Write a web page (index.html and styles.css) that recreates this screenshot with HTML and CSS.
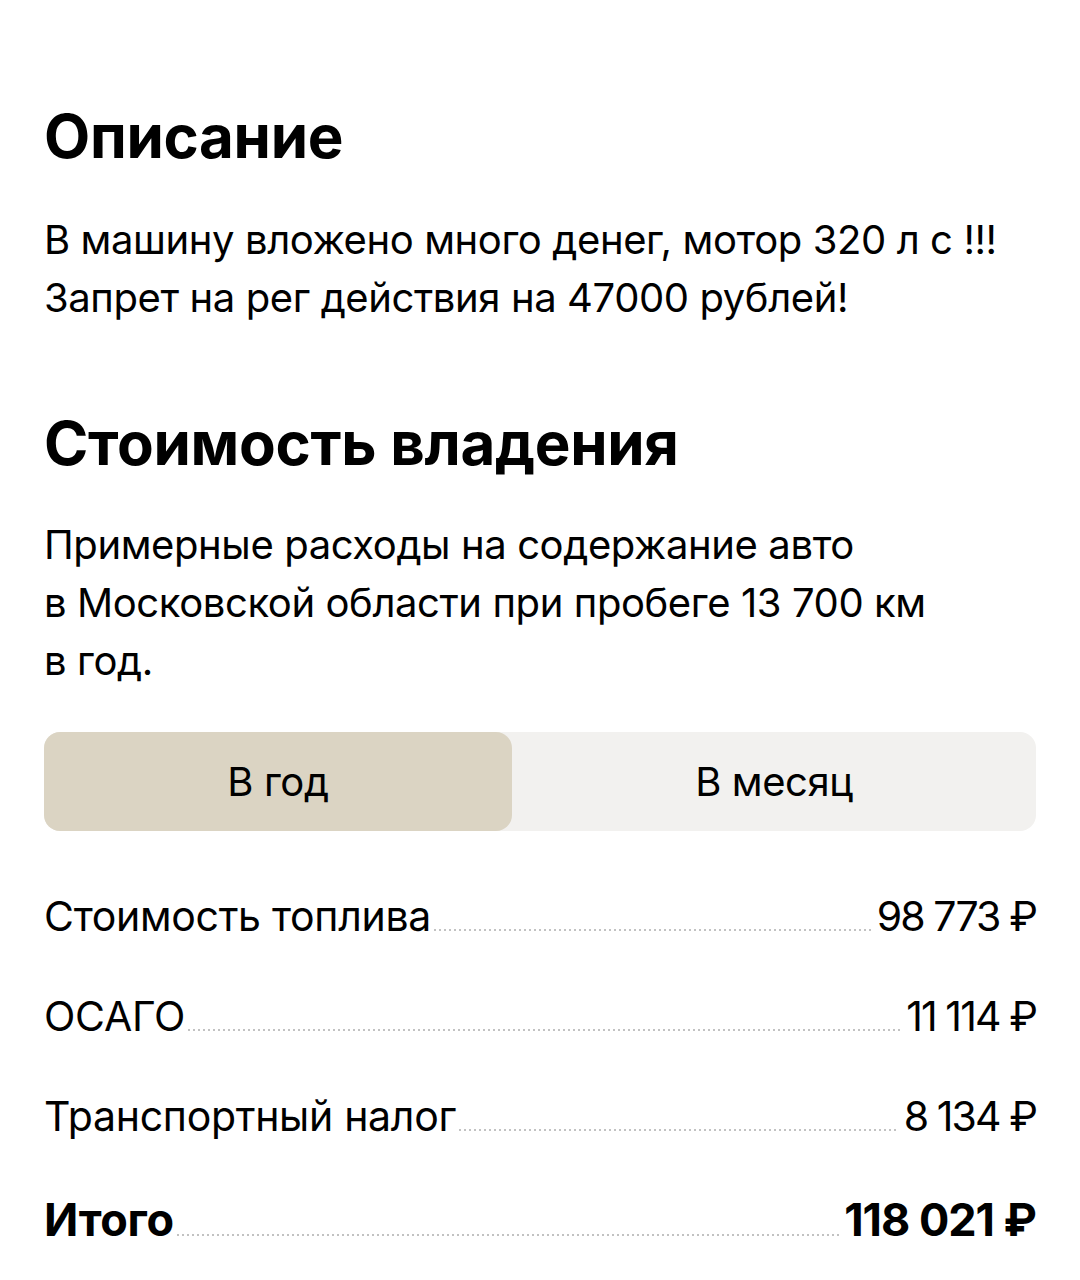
FILE: index.html
```html
<!DOCTYPE html>
<html lang="ru">
<head>
<meta charset="utf-8">
<link rel="stylesheet" href="styles.css">
</head>
<body>
<main class="page">
  <h2 class="title">Описание</h2>
  <p class="text desc">В машину вложено много денег, мотор 320 л с !!!<br>Запрет на рег действия на 47000 рублей!</p>

  <h2 class="title title-second">Стоимость владения</h2>
  <p class="text note">Примерные расходы на содержание авто<br>в&nbsp;Московской области при пробеге 13&nbsp;700&nbsp;км<br>в&nbsp;год.</p>

  <div class="toggle">
    <div class="tab tab-active">В год</div>
    <div class="tab">В месяц</div>
  </div>

  <div class="costs">
    <div class="row"><span class="label">Стоимость топлива</span><span class="leader"></span><span class="value">98&nbsp;773&nbsp;₽</span></div>
    <div class="row"><span class="label">ОСАГО</span><span class="leader"></span><span class="value">11&nbsp;114&nbsp;₽</span></div>
    <div class="row"><span class="label">Транспортный налог</span><span class="leader"></span><span class="value">8&nbsp;134&nbsp;₽</span></div>
    <div class="row row-total"><span class="label">Итого</span><span class="leader"></span><span class="value">118&nbsp;021&nbsp;₽</span></div>
  </div>
</main>
</body>
</html>
```

FILE: styles.css
```css
html, body {
  margin: 0;
  padding: 0;
  background: #ffffff;
}

body {
  font-family: "Inter", "Roboto", "Noto Sans", sans-serif;
  color: #000000;
}

.page {
  padding: 104px 44px 0 44px;
}

.title {
  margin: 0;
  font-size: 60px;
  line-height: 64px;
  font-weight: 700;
  letter-spacing: -0.3px;
}

.title-second {
  margin-top: 84px;
}

.text {
  margin: 0;
  font-size: 40px;
  line-height: 58px;
  font-weight: 400;
  letter-spacing: -0.4px;
}

.desc {
  margin-top: 43px;
}

.note {
  margin-top: 41px;
}

.toggle {
  margin-top: 42px;
  height: 99px;
  display: grid;
  grid-template-columns: 468px 1fr;
  background: #f2f1ef;
  border-radius: 16px;
}

.tab {
  display: flex;
  align-items: center;
  justify-content: center;
  font-size: 40px;
  letter-spacing: -0.4px;
  border-radius: 16px;
}

.tab-active {
  background: #dbd4c3;
}

.costs {
  margin-top: 35px;
}

.row {
  height: 100px;
  box-sizing: border-box;
  padding-top: 25px;
  display: flex;
  align-items: baseline;
  font-size: 41px;
  line-height: 50px;
  letter-spacing: -0.3px;
}

.leader {
  flex: 1;
  height: 2px;
  margin: 0 5px 0 3px;
  background-image: linear-gradient(to right, #c2c2c2 0, #c2c2c2 2px, transparent 2px);
  background-size: 5px 2px;
  background-repeat: repeat-x;
  background-position: left bottom;
}

.value {
  white-space: nowrap;
  letter-spacing: -1.9px;
}

.row-total {
  padding-top: 29px;
  font-weight: 700;
  font-size: 45px;
}

.row-total .value {
  letter-spacing: -1px;
}
```
